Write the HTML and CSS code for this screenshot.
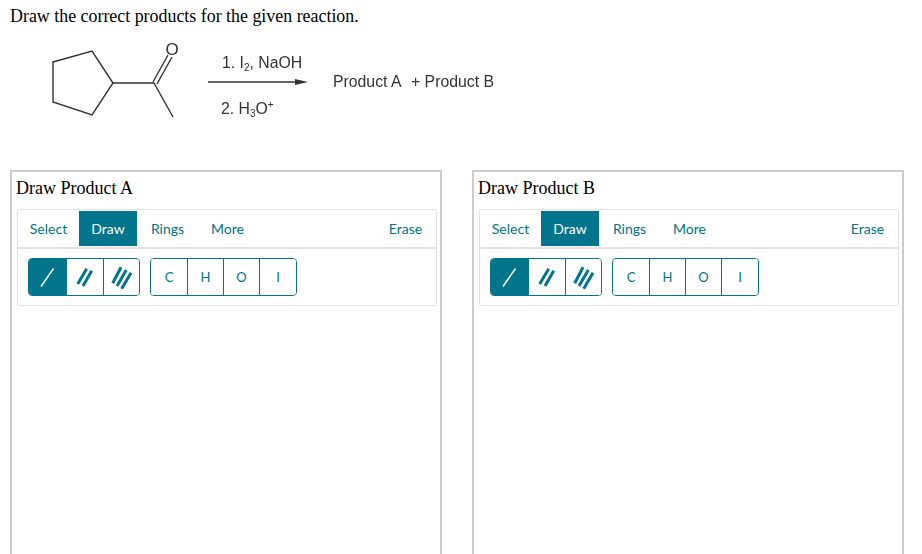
FILE: index.html
```html
<!DOCTYPE html>
<html lang="en">
<head>
<meta charset="utf-8">
<title>Draw the correct products</title>
<link rel="stylesheet" href="styles.css">
</head>
<body>
<p class="question">Draw the correct products for the given reaction.</p>
<svg class="scheme" width="520" height="100" viewBox="0 0 520 100" aria-label="Reaction scheme">
  <g class="bonds">
    <path d="M53 22 L92 11 L113 43 L92 75 L53 62 Z"/>
    <path d="M113 43 L154 43 L173 77"/>
    <path d="M153 42 L168 15"/>
    <path d="M157 44 L172 17"/>
  </g>
  <text class="atom" x="172" y="14.5" text-anchor="middle">O</text>
  <text class="label" x="222" y="27.5">1. I<tspan class="sub" dy="3">2</tspan><tspan dy="-3">, NaOH</tspan></text>
  <path class="arrow-line" d="M208 42 L298 42"/>
  <path class="arrow-head" d="M295 39 L308 42 L295 45 Z"/>
  <text class="label" x="221" y="73.5">2. H<tspan class="sub" dy="3">3</tspan><tspan dy="-3">O</tspan><tspan class="sup" dy="-6">+</tspan></text>
  <text class="label" x="333" y="46.5">Product A</text>
  <text class="label" x="411" y="46.5">+ Product B</text>
</svg>
<main class="panels">
  <section class="panel">
    <h2 class="panel-title">Draw Product A</h2>
    <div class="editor">
      <div class="tabs">
        <button class="tab">Select</button>
        <button class="tab tab-active">Draw</button>
        <button class="tab">Rings</button>
        <button class="tab tab-more">More</button>
        <button class="tab tab-erase">Erase</button>
      </div>
      <div class="tools">
        <div class="group">
          <button class="tool tool-active bond-tool"><svg width="37" height="36" viewBox="0 0 37 36"><path class="b-thin" d="M12 27.5 L24.5 9.5"/></svg></button>
          <button class="tool bond-tool"><svg width="36" height="36" viewBox="0 0 36 36"><path class="b-thick" d="M10.7 25 L19.7 9.7 M16 27 L24.7 11.7"/></svg></button>
          <button class="tool bond-tool"><svg width="35" height="36" viewBox="0 0 35 36"><path class="b-thick" d="M8.7 24.3 L17 8.3 M13 27 L22.3 11 M17.7 29.7 L27 13.7"/></svg></button>
        </div>
        <div class="group">
          <button class="tool atom-tool">C</button>
          <button class="tool atom-tool">H</button>
          <button class="tool atom-tool">O</button>
          <button class="tool atom-tool">I</button>
        </div>
      </div>
    </div>
  </section>
  <section class="panel">
    <h2 class="panel-title">Draw Product B</h2>
    <div class="editor">
      <div class="tabs">
        <button class="tab">Select</button>
        <button class="tab tab-active">Draw</button>
        <button class="tab">Rings</button>
        <button class="tab tab-more">More</button>
        <button class="tab tab-erase">Erase</button>
      </div>
      <div class="tools">
        <div class="group">
          <button class="tool tool-active bond-tool"><svg width="37" height="36" viewBox="0 0 37 36"><path class="b-thin" d="M12 27.5 L24.5 9.5"/></svg></button>
          <button class="tool bond-tool"><svg width="36" height="36" viewBox="0 0 36 36"><path class="b-thick" d="M10.7 25 L19.7 9.7 M16 27 L24.7 11.7"/></svg></button>
          <button class="tool bond-tool"><svg width="35" height="36" viewBox="0 0 35 36"><path class="b-thick" d="M8.7 24.3 L17 8.3 M13 27 L22.3 11 M17.7 29.7 L27 13.7"/></svg></button>
        </div>
        <div class="group">
          <button class="tool atom-tool">C</button>
          <button class="tool atom-tool">H</button>
          <button class="tool atom-tool">O</button>
          <button class="tool atom-tool">I</button>
        </div>
      </div>
    </div>
  </section>
</main>
</body>
</html>
```
FILE: styles.css
```css
html, body {
  margin: 0;
  height: 100%;
  overflow: hidden;
  background: #fff;
}
body {
  padding: 6px 10px 0;
  box-sizing: border-box;
  font-family: "Liberation Serif", "Times New Roman", serif;
  color: #000;
}
.question {
  margin: 0;
  font-size: 17.9px;
  line-height: 21px;
}
.scheme {
  display: block;
  margin: 13px 0 0 -10px;
  filter: blur(0.35px);
}
.bonds path {
  fill: none;
  stroke: #333;
  stroke-width: 1.4;
}
.atom, .label {
  font-family: "Liberation Sans", Arial, sans-serif;
  font-size: 15.8px;
  fill: #333;
}
.atom { font-size: 17px; }
.sub { font-size: 10px; }
.sup { font-size: 10px; }
.arrow-line { stroke: #333; stroke-width: 1.3; fill: none; }
.arrow-head { fill: #333; }
.panels {
  display: flex;
  gap: 30px;
  margin-top: 30px;
}
.panel {
  box-sizing: border-box;
  width: 432px;
  height: 384px;
  border: 2px solid #ccc;
  border-bottom: 0;
  padding: 6px 3px 0 5px;
  flex: none;
}
.panel-title {
  margin: 0 0 10px -1px;
  font-size: 18px;
  font-weight: normal;
  line-height: 21px;
}
.editor {
  border: 1px solid #e3e3e3;
  border-radius: 2px;
  font-family: Lato, "Open Sans", sans-serif;
  color: #007489;
}
.tabs {
  display: flex;
  align-items: stretch;
  height: 35px;
  padding: 1px 0;
  border-bottom: 2px solid #e3e3e3;
}
.tab {
  border: 0;
  background: none;
  padding: 0;
  font: inherit;
  font-size: 14px;
  color: #007489;
  width: 61px;
}
.tab-active {
  width: 58px;
  background: #00758c;
  color: #fff;
}
.tab-more { width: 59px; }
.tab-erase {
  margin-left: auto;
  width: 61px;
}
.tools {
  display: flex;
  gap: 10px;
  padding: 9px 10px 9px;
}
.group {
  display: flex;
  border: 1px solid #00758c;
  border-radius: 4px;
  height: 36px;
  overflow: hidden;
}
.tool {
  border: 0;
  border-left: 1px solid #00758c;
  background: #fff;
  padding: 0;
  font: inherit;
  font-size: 13px;
  color: #007489;
  display: flex;
  align-items: center;
  justify-content: center;
}
.tool:first-child { border-left: 0; }
.bond-tool { width: 37px; }
.bond-tool:last-child { width: 36px; }
.atom-tool { width: 36px; }
.atom-tool:last-child { width: 37px; }
.tool-active { background: #00758c; }
.b-thin { stroke: #fff; stroke-width: 1.5; fill: none; }
.b-thick { stroke: #00758c; stroke-width: 3; fill: none; }
```
